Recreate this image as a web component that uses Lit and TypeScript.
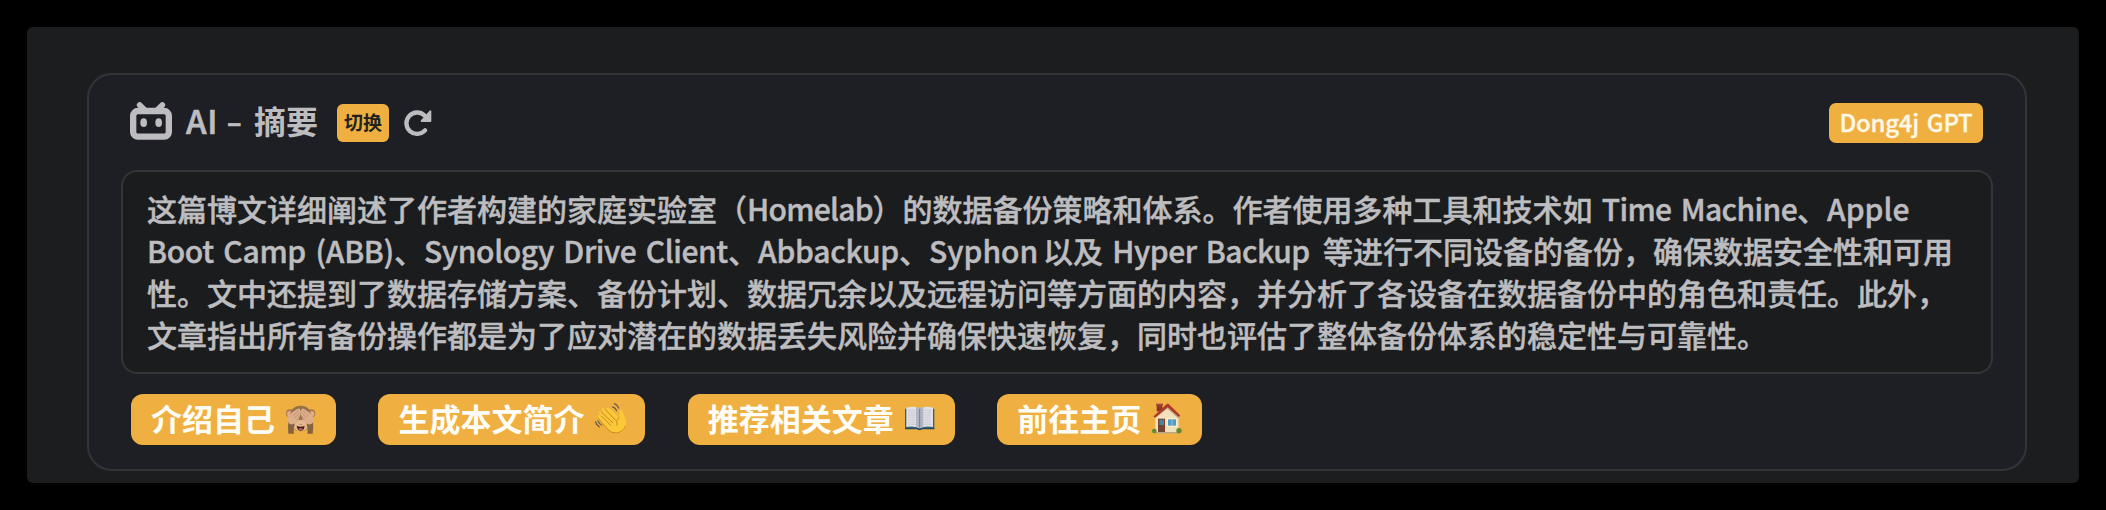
import { LitElement, html, svg, css } from "lit";
import { customElement } from "lit/decorators.js";

const botIcon = html`<svg class="bot" viewBox="0 0 126 114" aria-hidden="true">
  <path d="M29 9 42 22M97 9 84 22" fill="none" stroke="currentColor" stroke-width="17" stroke-linecap="round" />
  <rect x="9.5" y="27" width="107" height="77" rx="14" fill="none" stroke="currentColor" stroke-width="19" />
  <ellipse cx="41" cy="62" rx="10" ry="13" fill="currentColor" />
  <ellipse cx="86" cy="62" rx="10" ry="13" fill="currentColor" />
</svg>`;

const refreshIcon = html`<svg class="refresh" viewBox="0 0 84 78" aria-hidden="true">
  <path d="M63 61A32 32 0 1 1 61 16" fill="none" stroke="currentColor" stroke-width="13" stroke-linecap="round" />
  <path d="M82 3V33Q82 36 79 36H53Q48 35 51 31L76 3Q80 -1 82 3Z" fill="currentColor" />
</svg>`;

const monkey = svg`
  <circle cx="540" cy="130" r="12" fill="#a67850" /><circle cx="604" cy="130" r="12" fill="#a67850" />
  <circle cx="539" cy="131" r="8" fill="#e3ac82" /><circle cx="605" cy="131" r="8" fill="#e3ac82" />
  <path d="M572 107C598 107 606 128 604 148C602 174 590 184 572 184C554 184 542 174 540 148C538 128 546 107 572 107Z" fill="#94704c" />
  <ellipse cx="572" cy="166" rx="25" ry="17" fill="#e5b78e" />
  <path d="M560 168Q572 173 584 168Q582 182 572 182Q562 182 560 168Z" fill="#3a2016" />
  <path d="M565 176Q572 172 579 176Q577 181 572 181Q567 181 565 176Z" fill="#c95450" />
  <path d="M535 191Q533 172 535 154L555 158Q549 176 552 191Z" fill="#87623f" />
  <path d="M608 191Q611 172 609 154L589 158Q595 176 592 191Z" fill="#87623f" />
  <path d="M534 156C530 145 536 134 547 127L563 116Q568 114 569 118L572 122Q575 126 571 134L567 147Q561 160 549 163Q538 165 534 156Z" fill="#dcae8a" />
  <path d="M610 156C614 145 608 134 597 127L581 116Q576 114 575 118L573 122Q570 126 573 134L577 147Q583 160 595 163Q606 165 610 156Z" fill="#dcae8a" />
  <path d="M566 121 548 138M570 127 554 144M570 137 560 150M578 121 596 138M574 127 590 144M574 137 584 150" fill="none" stroke="#b98460" stroke-width="2" />
  <ellipse cx="570" cy="163" rx="1.6" ry="1.1" fill="#714a32" /><ellipse cx="575" cy="163" rx="1.6" ry="1.1" fill="#714a32" />`;

const wave = svg`
  <path d="M684 106Q689 102 693 107L688 99Q687 92 694 92L698 95L696 88Q698 81 705 85L709 88Q711 80 718 84L748 112Q750 110 747 97Q747 89 754 90Q757 91 759 98L768 122Q772 140 759 152Q747 163 732 160Q722 158 713 148L686 116Q681 110 684 106Z" fill="#fbc838" />
  <path d="M694 108 722 136M693 95 728 128M704 87 737 121" fill="none" stroke="#c98420" stroke-width="3" stroke-linecap="round" />
  <path d="M747 112Q736 121 741 135M713 148Q725 161 740 159Q759 156 766 139M686 116 713 148" fill="none" stroke="#d08a20" stroke-width="3" stroke-linecap="round" />
  <path d="M728 81Q736 83 740 92M733 71Q742 74 746 84M677 126Q679 136 688 141M684 123Q687 132 695 135" fill="none" stroke="#6f6040" stroke-width="4" stroke-linecap="round" />`;

const book = svg`
  <path d="M705 86H793V147H757Q749 153 741 147H705Z" fill="#376178" />
  <path d="M705 144H742Q749 150 757 144H793V148H757Q749 153 741 148H705Z" fill="#28485d" />
  <path d="M709 83Q733 76 749 85Q765 76 789 83V141Q765 137 749 145Q733 137 709 141Z" fill="#e0e1e7" />
  <path d="M738 81Q746 82 749 86Q752 82 760 81V140Q753 140 749 145Q745 140 738 140Z" fill="#b1b4c1" />
  <path d="M749 86V145" stroke="#6d7484" stroke-width="2.5" />
  <path d="M715 91H735M715 98H736M715 105H736M715 112H736M715 119H736M715 126H736M715 133H736M763 91H783M763 98H783M763 105H783M763 112H783M763 119H783M763 126H783M763 133H783" stroke="#bcbfca" stroke-width="2" />`;

const house = svg`
  <path d="M530 73H547V94H530Z" fill="#8d3526" /><path d="M528 71H549V77H528Z" fill="#a54a35" />
  <path d="M526 106 562 76 596 108V158H526Z" fill="#f2dfbb" />
  <path d="M526 106 562 76 596 108V116L562 86 526 115Z" fill="#cba987" />
  <path d="M521 109 560 72Q563 70 566 72L600 105Q601 111 595 110L563 82 527 112Q521 114 521 109Z" fill="#ad3929" />
  <rect x="534" y="116" width="21" height="42" fill="#754331" /><rect x="538" y="119" width="14" height="16" fill="#4784a3" />
  <rect x="561" y="115" width="29" height="25" fill="#fff0cd" /><rect x="564" y="118" width="24" height="19" fill="#509ec7" />
  <path d="M576 118V137" stroke="#b8d6df" stroke-width="2" />
  <path d="M524 156H598V160H524Z" fill="#b9a389" />
  <circle cx="523" cy="153" r="7" fill="#64892d" /><circle cx="597" cy="152" r="8" fill="#64892d" />`;

const actions = [
  { label: "介绍自己", box: "525 102 93 93", art: monkey },
  { label: "生成本文简介", box: "672 72 93 93", art: wave },
  { label: "推荐相关文章", box: "702 72 93 93", art: book },
  { label: "前往主页", box: "513 72 93 93", art: house },
];

@customElement("app-root")
export class AppRoot extends LitElement {
  static styles = css`
    :host {
      display: block;
      box-sizing: border-box;
      height: 510px;
      padding: 27px;
      background: #000;
      color: #bdbdc0;
      font-family: "Noto Sans CJK SC", sans-serif;
      font-weight: 500;
      overflow: hidden;
    }
    .panel {
      box-sizing: border-box;
      height: 456px;
      padding: 46px 52px 12px 60px;
      border-radius: 6px;
      background: #1c1d1e;
    }
    .card {
      box-sizing: border-box;
      height: 398px;
      padding: 28px 32px 0;
      border: 2px solid #333437;
      border-radius: 25px;
      background: #1e1f24;
    }
    .head {
      display: flex;
      align-items: center;
      height: 40px;
      padding: 0 10px 0 9px;
    }
    .bot { width: 42px; height: 38px; margin-top: -4px; }
    .title {
      display: flex;
      align-items: center;
      margin-left: 14px;
      width: 151px;
      font-size: 32px;
      line-height: 40px;
      margin-top: -6px;
      white-space: pre;
    }
    .ai { width: 41px; font-size: 33px; letter-spacing: 0.8px; -webkit-text-stroke: 0.7px currentColor; }
    .dash { width: 27px; transform: scaleX(1.4); transform-origin: 2px 50%; -webkit-text-stroke: 0.5px currentColor; }
    .cn { font-weight: 700; }
    .switch {
      margin-top: -1px;
      width: 52px;
      height: 38px;
      border-radius: 6px;
      background: #efb041;
      color: #23221f;
      font-size: 19px;
      font-weight: 700;
      line-height: 36px;
      text-align: center;
    }
    .refresh { width: 28px; height: 26px; margin-left: 15px; }
    .tag {
      margin-left: auto;
      width: 154px;
      height: 40px;
      border-radius: 7px;
      background: #efb041;
      color: #fff8e6;
      font-size: 24px;
      line-height: 37px;
      text-align: center;
      letter-spacing: -0.3px;
      word-spacing: 3px;
      -webkit-text-stroke: 0.3px currentColor;
    }
    .summary {
      box-sizing: border-box;
      height: 204px;
      margin-top: 27px;
      padding: 14.5px 0 0 24px;
      border: 2px solid #333436;
      border-radius: 16px;
      background: #1b1c1d;
      font-size: 30px;
      line-height: 42px;
      word-spacing: 3px;
      -webkit-text-stroke: 0.45px currentColor;
    }
    .line { display: flex; height: 42px; white-space: pre; }
    .homelab { width: 125.5px; letter-spacing: -0.75px; }
    .machine { width: 204.5px; letter-spacing: -0.6px; }
    .boot { width: 247px; letter-spacing: -0.3px; }
    .synology { width: 304px; letter-spacing: -0.4px; }
    .abbackup { width: 141px; letter-spacing: -0.25px; }
    .syphon { width: 114px; }
    .hyper { width: 220px; letter-spacing: -0.5px; }
    .actions { display: flex; gap: 42.4px; margin: 20px 0 0 10px; }
    .action {
      display: flex;
      align-items: center;
      box-sizing: border-box;
      height: 51px;
      padding: 0 20px;
      border-radius: 12px;
      background: #efb041;
      color: #fffdf8;
      font-size: 31px;
      font-weight: 700;
      line-height: 51px;
      white-space: nowrap;
    }
    .label { height: 51px; margin-top: -5px; }
    .emoji { width: 31px; height: 31px; margin-left: 10px; overflow: visible; }
  `;

  render() {
    return html`<main class="panel">
      <section class="card">
        <header class="head">
          ${botIcon}
          <div class="title"><span class="ai">AI</span><span class="dash">-</span><span class="cn">摘要</span></div>
          <span class="switch">切换</span>
          ${refreshIcon}
          <span class="tag">Dong4j GPT</span>
        </header>
        <div class="summary">
          <div class="line"><span>这篇博文详细阐述了作者构建的家庭实验室（</span><span class="homelab">Homelab</span><span>）的数据备份策略和体系。作者使用多种工具和技术如</span><span class="machine"> Time Machine</span><span>、Apple</span></div>
          <div class="line"><span class="boot">Boot Camp (ABB)</span><span>、</span><span class="synology">Synology Drive Client</span><span>、</span><span class="abbackup">Abbackup</span><span>、</span><span class="syphon">Syphon </span><span>以及</span><span class="hyper"> Hyper Backup </span><span>等进行不同设备的备份，确保数据安全性和可用</span></div>
          <div class="line"><span>性。文中还提到了数据存储方案、备份计划、数据冗余以及远程访问等方面的内容，并分析了各设备在数据备份中的角色和责任。此外，</span></div>
          <div class="line"><span>文章指出所有备份操作都是为了应对潜在的数据丢失风险并确保快速恢复，同时也评估了整体备份体系的稳定性与可靠性。</span></div>
        </div>
        <nav class="actions">
          ${actions.map((a) => html`<div class="action"><span class="label">${a.label}</span><svg class="emoji" viewBox=${a.box} aria-hidden="true">${a.art}</svg></div>`)}
        </nav>
      </section>
    </main>`;
  }
}
